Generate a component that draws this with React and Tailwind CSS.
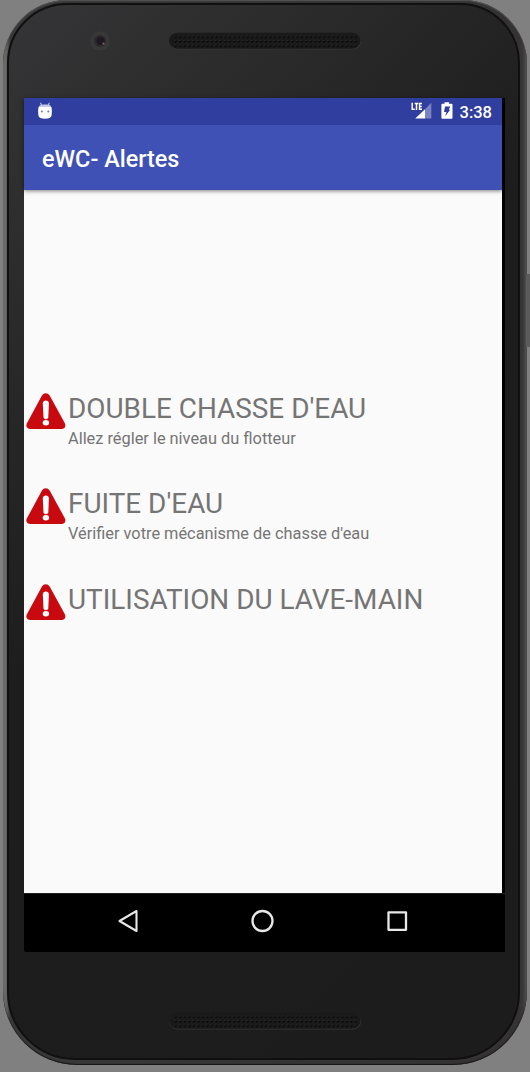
import React from "react";

const alerts = [
  { title: "DOUBLE CHASSE D'EAU", detail: "Allez régler le niveau du flotteur" },
  { title: "FUITE D'EAU", detail: "Vérifier votre mécanisme de chasse d'eau" },
  { title: "UTILISATION DU LAVE-MAIN", detail: "" },
];

function Speaker({ id }) {
  return (
    <svg className="block h-[18px] w-[194px]" viewBox="0 0 194 18">
      <defs>
        <pattern id={id} width="4.5" height="4.5" patternUnits="userSpaceOnUse" x="1" y="2.7">
          <rect x="1.3" y="1.3" width="1.9" height="1.9" fill="#050505" />
          <rect x="1.2" y="1" width="1" height="0.8" fill="#3c3c3c" />
        </pattern>
      </defs>
      <rect x="1" y="1.4" width="192" height="16" rx="8" fill="#363636" />
      <rect x="1" y="0.7" width="191.5" height="16" rx="8" fill="#1a1a1a" />
      <rect x="4" y="2.7" width="186" height="13.5" rx="6" fill={`url(#${id})`} />
    </svg>
  );
}

function Camera() {
  return (
    <svg className="block size-5" viewBox="0 0 20 20">
      <circle cx="10" cy="10" r="9.8" fill="#383838" />
      <circle cx="10" cy="10" r="6" fill="#2b292e" />
      <circle cx="10.5" cy="10" r="4" fill="#1d1824" />
      <circle cx="13.5" cy="12.7" r="1.1" fill="#80605b" />
    </svg>
  );
}

function Warning() {
  return (
    <svg className="block h-[37px] w-10 shrink-0" viewBox="0 0 40 37">
      <path d="M15.8 2.8C17.8-.5 21.8-.5 23.8 2.8L38.6 29.8C40.5 33.4 38.7 36 35.5 36H4.5C1 36-.8 33 1.2 29.8Z" fill="#c80a10" />
      <path d="M16.8 10.2C16.8 6.6 22.9 6.6 22.9 10.2L22.3 24.3Q21.8 26.2 19.9 26.2T17.5 24.3Z" fill="#fff" />
      <ellipse cx="19.9" cy="29.8" rx="3.2" ry="2.7" fill="#fff" />
    </svg>
  );
}

function AndroidHead() {
  return (
    <svg className="block h-[17px] w-4" viewBox="0 0 16 17">
      <path d="M3.6.8L4.7 4M12.2.8L11.2 4" stroke="#dfe1f2" strokeWidth="1" />
      <path d="M2 5C2 3 5 2.6 8 2.6S14 3 14 5Z" fill="#c5c9e8" />
      <path d="M1.5 5H14.5Q15.3 9 14.6 13.2Q14.2 16.7 8 16.7T1.4 13.2Q.7 9 1.5 5Z" fill="#fff" />
      <circle cx="4.9" cy="9.5" r="1" fill="#6f78c0" />
      <circle cx="11.3" cy="9.5" r="1" fill="#6f78c0" />
    </svg>
  );
}

function Signal() {
  return (
    <svg className="block h-[17px] w-[21px]" viewBox="0 0 21 17">
      <path d="M20.3.8V16.5H14V7.2Z" fill="#7b83c3" />
      <path d="M14 7.3V16.5H4.2Z" fill="#fff" />
      <path d="M1.2.8V7.3H3.8M3.7 1.5H7.3M5.5 1.5V8M11 1.5H8.6V7.3H11M8.6 4.4H10.7" fill="none" stroke="#fff" strokeWidth="1.5" />
    </svg>
  );
}

function Battery() {
  return (
    <svg className="block h-[17px] w-3" viewBox="0 0 12 17">
      <path d="M3.5.3H8V1.8H10.5Q11.5 1.8 11.5 2.8V15.7Q11.5 16.7 10.5 16.7H1.4Q.4 16.7.4 15.7V2.8Q.4 1.8 1.4 1.8H3.5Z" fill="#fff" />
      <path d="M4 4.5H9.2L7.8 7.7H9.2L4.2 14.2L5.4 9.9H3Z" fill="#303f9f" />
    </svg>
  );
}

export default function App() {
  return (
    <div className="relative h-[1072px] w-[530px] overflow-hidden bg-[#808080] font-['Roboto',sans-serif]">
      <div className="absolute top-[274px] left-[526px] h-[73px] w-1 bg-[#5b5b5b]" />
      <div className="ml-[3px] h-[1065px] w-[524px] rounded-t-[64px] rounded-b-[74px] bg-[linear-gradient(to_right,#777_0,#5e5e5e_4px,#383838_7px,#343233_516px,#3a3738_520px,#565656_524px)] pt-[3px] pr-[7px] pb-[5px] pl-1 shadow-[inset_0_-1px_1px_#161616,inset_0_1px_1px_#555]">
        <div className="h-full rounded-t-[60px] rounded-b-[68px] border-2 border-[#101010] bg-[linear-gradient(135deg,#353537_0%,#292929_23%,#1d1d1d_44%,#1c1c1c_100%)]">
          <div className="flex h-[93px] items-start pt-[26px] pl-[81px]">
            <Camera />
            <div className="ml-[58px] pt-px">
              <Speaker id="top-holes" />
            </div>
          </div>
          <main className="ml-[15px] flex h-[854px] w-[481px] flex-col rounded-bl-[2px] bg-black">
            <header className="relative w-[478px] shadow-[0_1px_4px_rgba(0,0,0,0.5)]">
              <div className="flex h-[27px] items-start bg-[#303f9f] pt-1 pl-[13px]">
                <AndroidHead />
                <div className="ml-auto flex items-start pr-[10px]">
                  <Signal />
                  <div className="ml-[9px]">
                    <Battery />
                  </div>
                  <span className="ml-[7px] pt-px text-[16.5px] leading-5 font-medium text-white">3:38</span>
                </div>
              </div>
              <h1 className="flex h-[65px] items-center bg-[#3f51b5] pt-1 pl-[18px] text-[23.4px] font-medium text-white">
                eWC- Alertes
              </h1>
            </header>
            <section className="h-[703px] w-[478px] bg-[#fafafa] pt-[202px] text-[#757575]">
              {alerts.map((alert) => (
                <article key={alert.title} className="flex h-[95.4px] items-start pl-[2px]">
                  <div className="pt-px">
                    <Warning />
                  </div>
                  <div className="ml-[2px] whitespace-nowrap">
                    <h2 className="text-[27.9px] leading-[33px]">{alert.title}</h2>
                    <p className="pt-[2px] text-[16.35px] leading-[24px]">{alert.detail}</p>
                  </div>
                </article>
              ))}
            </section>
            <nav className="flex h-[59px] items-center border-t border-[#222] pb-1 pl-[94px]">
              <svg className="block size-6" viewBox="0 0 24 24" fill="none" stroke="#e8e8e8" strokeWidth="2.1" strokeLinejoin="round">
                <path d="M18.5 2V22L1.5 12Z" />
              </svg>
              <svg className="ml-[109px] block size-6" viewBox="0 0 24 24" fill="none" stroke="#e8e8e8" strokeWidth="2.3">
                <circle cx="11.5" cy="12" r="10" />
              </svg>
              <svg className="ml-[111px] block size-6" viewBox="0 0 24 24" fill="none" stroke="#e8e8e8" strokeWidth="2.3" strokeLinejoin="round">
                <rect x="2.5" y="3.3" width="17.5" height="17.5" />
              </svg>
            </nav>
          </main>
          <div className="mt-[60px] ml-[159px]">
            <Speaker id="bottom-holes" />
          </div>
        </div>
      </div>
    </div>
  );
}
